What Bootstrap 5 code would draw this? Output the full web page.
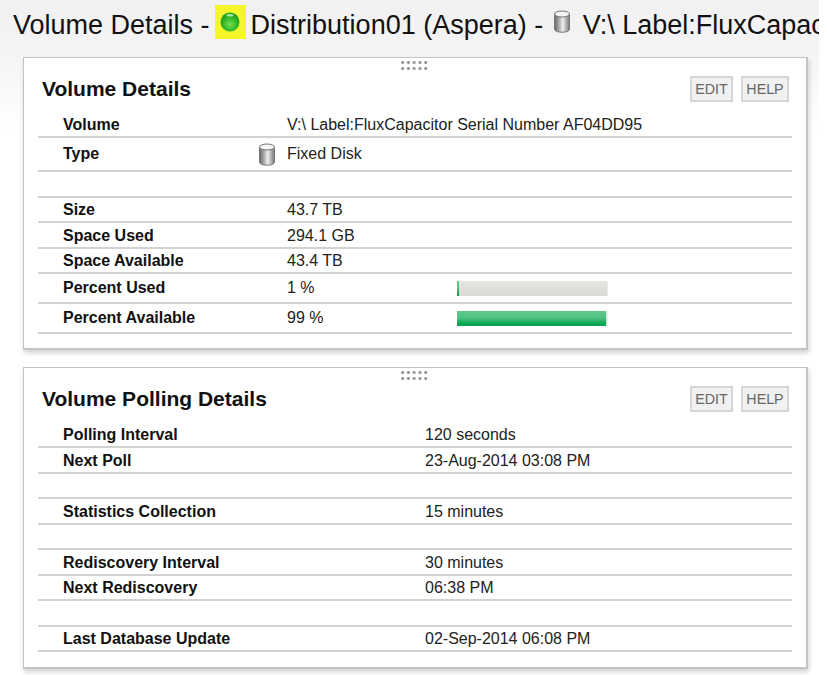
<!DOCTYPE html>
<html lang="en">
<head>
<meta charset="utf-8">
<title>Volume Details</title>
<link href="https://cdn.jsdelivr.net/npm/bootstrap@5.3.0/dist/css/bootstrap.min.css" rel="stylesheet">
<style>
html,body{height:100%;background:#fff;}
body{font-family:"Liberation Sans",Arial,sans-serif;color:#111;overflow:hidden;}
.pagewrap{width:819px;height:675px;overflow:hidden;background:linear-gradient(#f1f1f1 0,#f4f4f4 50px,#fff 130px);padding:0 11px 0 23px;}
.pagetitle{font-size:27px;font-weight:400;line-height:29px;margin:0 -11px 0 -10px;padding-top:5px;height:57px;white-space:nowrap;color:#111;}
.dot-wrap{display:inline-flex;width:31px;height:34px;background:#f5f52a;align-items:center;justify-content:center;margin-left:-2.5px;margin-right:5px;vertical-align:2px;}
.diskhead{margin:0 12px 0 2px;vertical-align:1px;}
.panelbox{width:785px;background:#fff;border:2px solid #c4c4c4;border-width:1px 2px 2px 1.5px;box-shadow:1px 3px 5px rgba(0,0,0,.18);position:relative;padding:0 14px;}
.panel-a{height:293px;margin-bottom:17px;}
.panel-b{height:302px;}
.grip{position:absolute;left:377px;top:3px;width:29px;height:11px;background-image:radial-gradient(circle at 1.5px 1.5px,#8f8f8f 1.3px,transparent 1.5px);background-size:5.8px 6px;}
.panelhead{height:42px;padding-left:4px;padding-top:17px;position:relative;}
.panelhead h2{font-size:21px;font-weight:700;line-height:28px;margin:0;color:#111;}
.actions{position:absolute;right:3px;top:18px;}
.actbtn{display:block;height:26px;width:48px;text-align:center;font-size:14.3px;line-height:22px;padding:0;color:#666;background:#f1f1f1;border:2px solid #d6d6d6;border-radius:0;text-transform:uppercase;}
.actbtn:first-child{width:43px;}
.inforow{display:flex;align-items:center;border-bottom:2px solid #d2d2d2;font-size:16px;line-height:18px;padding-left:25px;color:#222;}
.inforow .lbl{font-weight:700;color:#111;flex:none;}
.panel-a .lbl{width:224px;}
.panel-b .lbl{width:362px;}
.h-24{height:25.5px;padding-top:2px;}
.h-30{height:30px;}
.h-33{height:34px;}
.typeicon{margin-left:-29px;margin-right:11px;}
.meter{width:151px;height:15px;margin-left:133px;background:linear-gradient(#e6e5e2,#d9d8d4);border-right:1px solid #eee;}
.meter span{display:block;height:100%;background:linear-gradient(#62c98e 0,#4fc283 45%,#0aa552 85%,#0aa552 100%);}
.first-a{height:30px;margin-top:8px;padding-top:6px;}
.first-b{height:30px;margin-top:8px;padding-top:6px;}
</style>
</head>
<body>
<div class="pagewrap">
  <h1 class="pagetitle">Volume Details -
    <span class="dot-wrap"><svg width="20" height="20" viewBox="0 0 20 20"><defs><radialGradient id="gd" cx="50%" cy="62%" r="55%"><stop offset="0" stop-color="#7bdc4e"/><stop offset=".6" stop-color="#35bb2b"/><stop offset="1" stop-color="#1f9a22"/></radialGradient></defs><circle cx="10" cy="10" r="9.5" fill="url(#gd)"/><ellipse cx="10" cy="3.2" rx="3.6" ry="1.3" fill="#a8e896"/></svg></span>Distribution01 (Aspera) -
    <svg class="diskhead" width="18" height="23" viewBox="0 0 18 23"><defs><linearGradient id="dk1" x1="0" x2="1" y1="0" y2="0"><stop offset="0" stop-color="#666"/><stop offset=".3" stop-color="#aaa"/><stop offset=".55" stop-color="#eee"/><stop offset="1" stop-color="#777"/></linearGradient></defs><path d="M1.5 4v15c0 2 3 3.2 7.5 3.2s7.5-1.2 7.5-3.2V4z" fill="url(#dk1)" stroke="#777"/><ellipse cx="9" cy="4" rx="7.5" ry="3" fill="#f4f4f4" stroke="#777"/></svg>V:\ Label:FluxCapacitor Serial Number AF04DD95
  </h1>

  <section class="panelbox panel-a">
    <div class="grip"></div>
    <div class="panelhead"><h2>Volume Details</h2>
      <div class="actions d-flex gap-2"><a class="actbtn text-decoration-none">Edit</a><a class="actbtn text-decoration-none">Help</a></div>
    </div>
    <div class="inforow first-a"><span class="lbl">Volume</span><span>V:\ Label:FluxCapacitor Serial Number AF04DD95</span></div>
    <div class="inforow h-33"><span class="lbl">Type</span>
      <svg class="typeicon" width="18" height="23" viewBox="0 0 18 23"><defs><linearGradient id="dk2" x1="0" x2="1" y1="0" y2="0"><stop offset="0" stop-color="#666"/><stop offset=".3" stop-color="#aaa"/><stop offset=".55" stop-color="#eee"/><stop offset="1" stop-color="#777"/></linearGradient></defs><path d="M1.5 4v15c0 2 3 3.2 7.5 3.2s7.5-1.2 7.5-3.2V4z" fill="url(#dk2)" stroke="#777"/><ellipse cx="9" cy="4" rx="7.5" ry="3" fill="#f4f4f4" stroke="#777"/></svg>
      <span>Fixed Disk</span></div>
    <div class="inforow h-24"></div>
    <div class="inforow h-24"><span class="lbl">Size</span><span>43.7 TB</span></div>
    <div class="inforow h-24"><span class="lbl">Space Used</span><span>294.1 GB</span></div>
    <div class="inforow h-24"><span class="lbl">Space Available</span><span>43.4 TB</span></div>
    <div class="inforow h-30"><span class="lbl">Percent Used</span><span style="width:37px">1 %</span><div class="meter"><span style="width:1%;min-width:2px"></span></div></div>
    <div class="inforow h-30"><span class="lbl">Percent Available</span><span style="width:37px">99 %</span><div class="meter"><span style="width:99%"></span></div></div>
  </section>

  <section class="panelbox panel-b">
    <div class="grip"></div>
    <div class="panelhead"><h2>Volume Polling Details</h2>
      <div class="actions d-flex gap-2"><a class="actbtn text-decoration-none">Edit</a><a class="actbtn text-decoration-none">Help</a></div>
    </div>
    <div class="inforow first-b"><span class="lbl">Polling Interval</span><span>120 seconds</span></div>
    <div class="inforow h-24"><span class="lbl">Next Poll</span><span>23-Aug-2014 03:08 PM</span></div>
    <div class="inforow h-24"></div>
    <div class="inforow h-24"><span class="lbl">Statistics Collection</span><span>15 minutes</span></div>
    <div class="inforow h-24"></div>
    <div class="inforow h-24"><span class="lbl">Rediscovery Interval</span><span>30 minutes</span></div>
    <div class="inforow h-24"><span class="lbl">Next Rediscovery</span><span>06:38 PM</span></div>
    <div class="inforow h-24"></div>
    <div class="inforow h-24"><span class="lbl">Last Database Update</span><span>02-Sep-2014 06:08 PM</span></div>
  </section>
</div>
<script src="https://cdn.jsdelivr.net/npm/bootstrap@5.3.0/dist/js/bootstrap.bundle.min.js"></script>
</body>
</html>
